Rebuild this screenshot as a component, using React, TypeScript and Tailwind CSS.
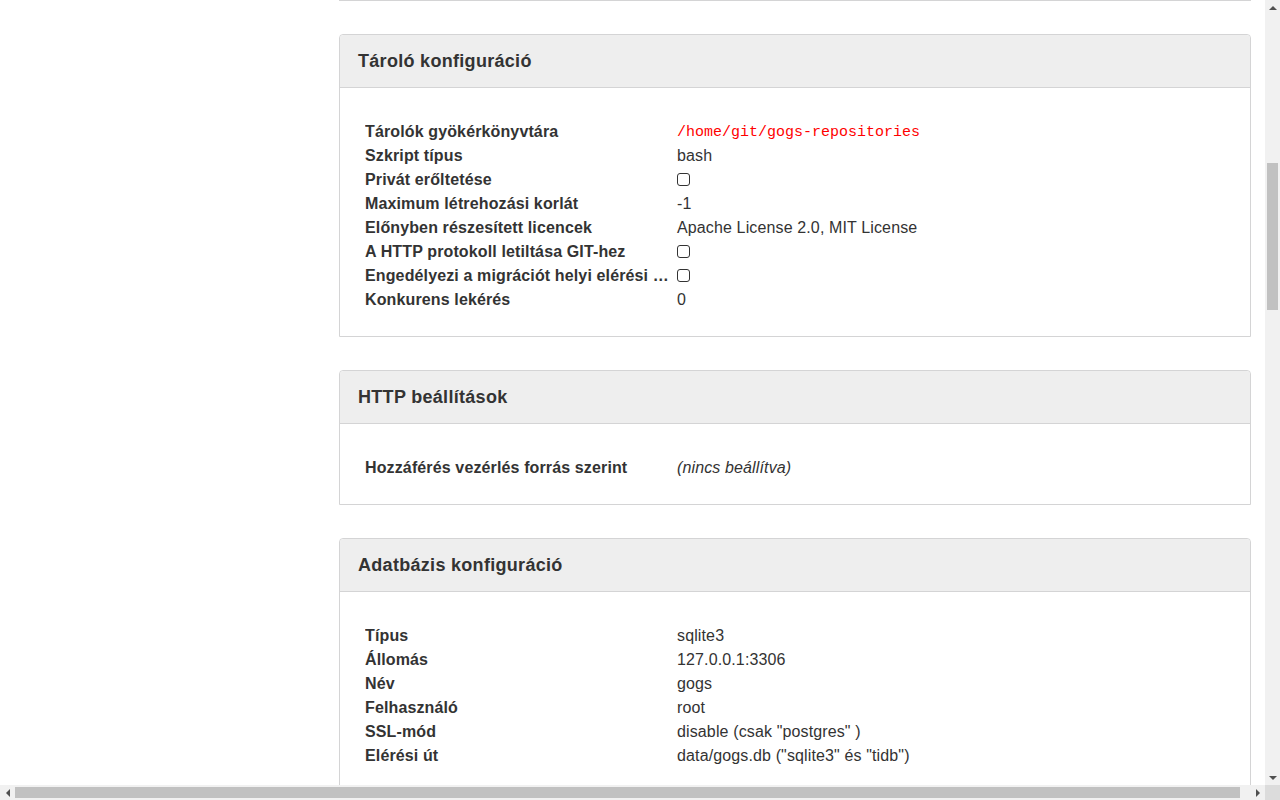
import React from 'react';

type Row = { label: string; value: React.ReactNode };

const Checkbox = () => (
  <span className="inline-block h-[13px] w-[13px] rounded-[3px] border border-[#333] align-[-1px]" />
);

const sections: { title: string; rows: Row[] }[] = [
  {
    title: 'Tároló konfiguráció',
    rows: [
      {
        label: 'Tárolók gyökérkönyvtára',
        value: (
          <span className="font-['Liberation_Mono',monospace] text-[15px] tracking-normal text-[#ff0000]">
            /home/git/gogs-repositories
          </span>
        ),
      },
      { label: 'Szkript típus', value: 'bash' },
      { label: 'Privát erőltetése', value: <Checkbox /> },
      { label: 'Maximum létrehozási korlát', value: '-1' },
      { label: 'Előnyben részesített licencek', value: 'Apache License 2.0, MIT License' },
      { label: 'A HTTP protokoll letiltása GIT-hez', value: <Checkbox /> },
      { label: 'Engedélyezi a migrációt helyi elérési útvonalról', value: <Checkbox /> },
      { label: 'Konkurens lekérés', value: '0' },
    ],
  },
  {
    title: 'HTTP beállítások',
    rows: [{ label: 'Hozzáférés vezérlés forrás szerint', value: <i>(nincs beállítva)</i> }],
  },
  {
    title: 'Adatbázis konfiguráció',
    rows: [
      { label: 'Típus', value: 'sqlite3' },
      { label: 'Állomás', value: '127.0.0.1:3306' },
      { label: 'Név', value: 'gogs' },
      { label: 'Felhasználó', value: 'root' },
      { label: 'SSL-mód', value: 'disable (csak "postgres" )' },
      { label: 'Elérési út', value: 'data/gogs.db ("sqlite3" és "tidb")' },
    ],
  },
];

function Card({ title, rows }: { title: string; rows: Row[] }) {
  return (
    <div className="shrink-0 rounded-t-[4px] border border-[#d4d4d5]">
      <div className="flex h-[53px] items-center rounded-t-[4px] border-b border-[#d4d4d5] bg-[#eeeeee] px-[18px] text-[18px] font-bold tracking-[0.3px]">
        {title}
      </div>
      <div className="px-[25px] pt-[32px] pb-[24px]">
        {rows.map((r) => (
          <div key={r.label} className="flex h-[24px] items-center text-[16px] leading-[24px] tracking-[0.13px]">
            <div className="w-[312px] shrink-0 truncate pr-[8px] font-bold">{r.label}</div>
            <div>{r.value}</div>
          </div>
        ))}
      </div>
    </div>
  );
}

const Tri = ({ dir }: { dir: 'up' | 'down' | 'left' | 'right' }) => {
  const pts = {
    up: '0,4 4,0 8,4',
    down: '0,0 8,0 4,4',
    left: '4,0 4,8 0,4',
    right: '0,0 4,4 0,8',
  }[dir];
  const vert = dir === 'up' || dir === 'down';
  return (
    <svg width={vert ? 8 : 4} height={vert ? 4 : 8} viewBox={vert ? '0 0 8 4' : '0 0 4 8'}>
      <polygon points={pts} fill="#505050" />
    </svg>
  );
};

export default function App() {
  return (
    <div className="flex h-[800px] w-[1280px] flex-col overflow-hidden bg-white font-['Liberation_Sans',Arial,sans-serif] text-[#333]">
      <div className="flex min-h-0 flex-1">
        <main className="min-w-0 flex-1 overflow-hidden">
          <div className="ml-[339px] flex w-[912px] flex-col gap-[33px]">
            <div className="h-px shrink-0 border-x border-b border-[#d4d4d5]" />
            {sections.map((s) => (
              <Card key={s.title} title={s.title} rows={s.rows} />
            ))}
          </div>
        </main>
        {/* vertical scrollbar */}
        <div className="flex w-[15px] shrink-0 flex-col bg-[#f1f1f1]">
          <div className="flex h-[15px] items-center justify-center">
            <Tri dir="up" />
          </div>
          <div className="mt-[148px] ml-[2px] h-[147px] w-[11px] bg-[#c1c1c1]" />
          <div className="flex-1" />
          <div className="flex h-[15px] items-center justify-center">
            <Tri dir="down" />
          </div>
        </div>
      </div>
      {/* horizontal scrollbar */}
      <div className="flex h-[15px] shrink-0 bg-[#f1f1f1]">
        <div className="flex w-[15px] items-center justify-center">
          <Tri dir="left" />
        </div>
        <div className="my-[2px] w-[1225px] bg-[#c1c1c1]" />
        <div className="flex-1" />
        <div className="flex w-[15px] items-center justify-center">
          <Tri dir="right" />
        </div>
        <div className="w-[15px] bg-[#dcdcdc]" />
      </div>
    </div>
  );
}
